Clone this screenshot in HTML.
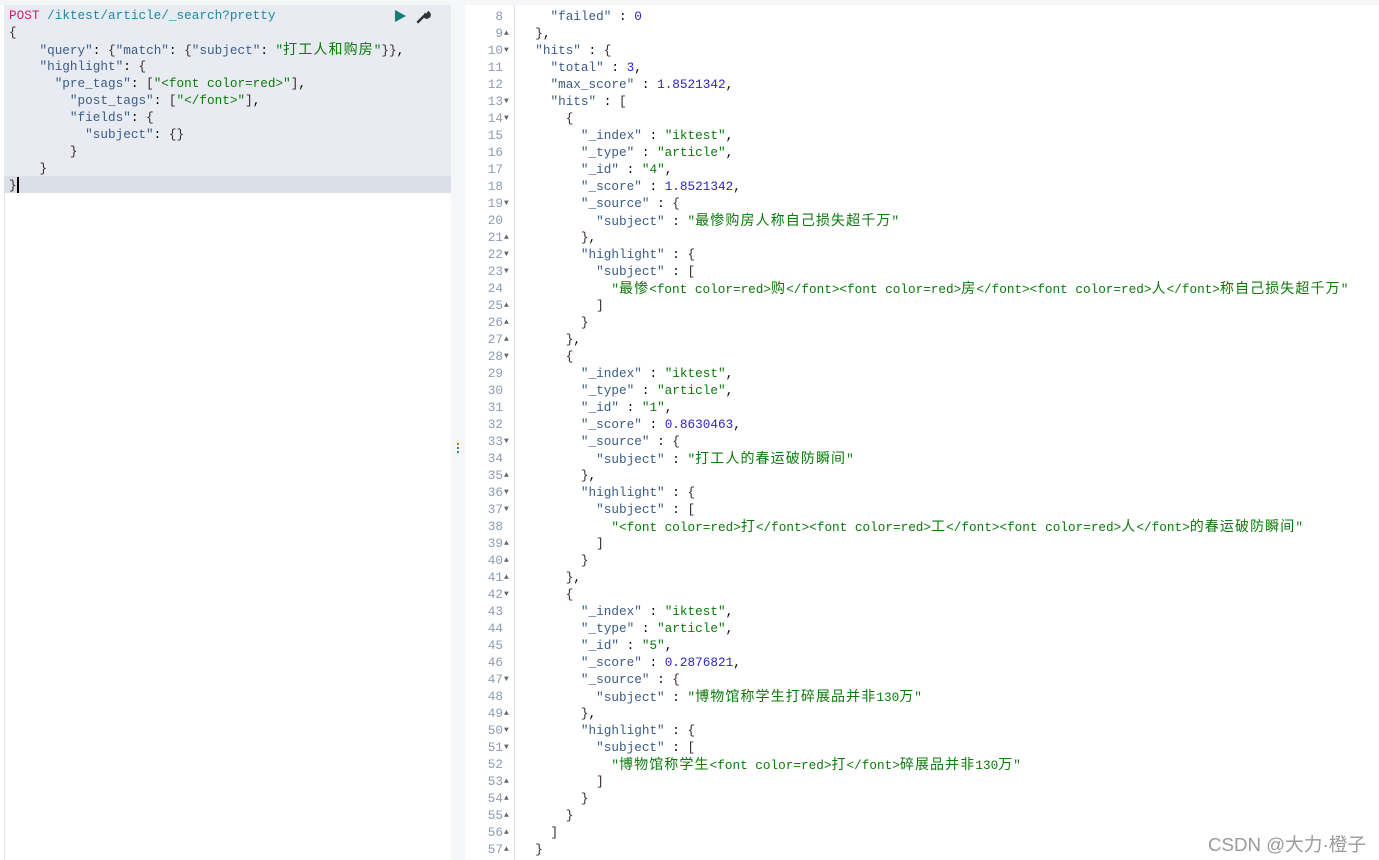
<!DOCTYPE html>
<html><head><meta charset="utf-8"><style>
*{margin:0;padding:0;box-sizing:border-box}
body{width:1379px;height:860px;background:#fff;position:relative;overflow:hidden;font-family:"Liberation Mono","Noto Sans CJK SC",monospace;font-size:12.7px;color:#000}
.top{position:absolute;left:0;top:0;width:1379px;height:5px;background:#f5f6f8}
.lp{position:absolute;left:4px;top:5px;width:447px;height:855px;background:#fff;border-left:1px solid #e3e6ea}
.lbg{position:absolute;left:4px;top:5px;width:447px;height:188px;background:#e8ebf2}
.cur{position:absolute;left:4px;top:176px;width:447px;height:17px;background:#dadfe8}
.div{position:absolute;left:451px;top:5px;width:14px;height:855px;background:#f5f6f8}
.dots{position:absolute;left:457px;top:443px;width:2px;height:10px;background:linear-gradient(#d0771b 0 2px,transparent 2px 4px,#3a78c0 4px 6px,transparent 6px 8px,#3a78c0 8px 10px)}
.gut{position:absolute;left:514px;top:5px;width:1px;height:855px;background:#dde2ea}
.code{position:absolute;white-space:pre;line-height:17px}
.code div{height:17px}
.L{left:9px;top:7px}
.R{left:520px;top:8px}
.nums{position:absolute;left:465px;top:8px;width:38px;text-align:right;line-height:17px;color:#8d9bb2;white-space:pre}
.arr{position:absolute;left:504px;top:8px;line-height:17px;font-size:8px;color:#666;white-space:pre}
.arr div{height:17px}
.k{color:#3b5c86}.s{color:#0b7a0b}.n{color:#2c22d0}.b{color:#3a2a2a}
.m{color:#d41e6b}.u{color:#1b8aa3}
i{font-style:normal;font-size:14px;letter-spacing:1.1px;font-family:"Noto Sans CJK SC",sans-serif}
.wm{position:absolute;left:1208px;top:830px;font-family:"Liberation Sans","Noto Sans CJK SC",sans-serif;font-size:18.7px;color:#9a9a9a}
.play{position:absolute;left:395px;top:10px;width:0;height:0;border-left:11px solid #167d72;border-top:6.5px solid transparent;border-bottom:6.5px solid transparent}
.cursor{position:absolute;left:17px;top:177px;width:2px;height:16px;background:#000}
</style></head><body>
<div class="top"></div>
<div class="lp"></div><div class="lbg"></div><div class="cur"></div>
<div class="div"></div><div class="dots"></div><div class="gut"></div>
<div class="play"></div>
<svg style="position:absolute;left:416px;top:9px" width="15" height="15" viewBox="0 0 15 15"><path d="M2 13 L8 7" stroke="#333" stroke-width="2.5" stroke-linecap="round"/><path d="M7 7 A4 4 0 1 0 12 2 L10.5 4.5 L9 4 L9.5 2.5 Z" fill="#333"/></svg>
<div class="cursor"></div>
<div class="code L"><div><span class="m">POST</span> <span class="u">/iktest/article/_search?pretty</span></div><div class="b">{</div><div>    <span class="k">"query"</span>: <span class="b">{</span><span class="k">"match"</span>: <span class="b">{</span><span class="k">"subject"</span>: <span class="s">"<i>打工人和购房</i>"</span><span class="b">}}</span>,</div><div>    <span class="k">"highlight"</span>: <span class="b">{</span></div><div>      <span class="k">"pre_tags"</span>: <span class="b">[</span><span class="s">"&lt;font color=red&gt;"</span><span class="b">]</span>,</div><div>        <span class="k">"post_tags"</span>: <span class="b">[</span><span class="s">"&lt;/font&gt;"</span><span class="b">]</span>,</div><div>        <span class="k">"fields"</span>: <span class="b">{</span></div><div>          <span class="k">"subject"</span>: <span class="b">{}</span></div><div>        <span class="b">}</span></div><div>    <span class="b">}</span></div><div class="b">}</div></div>
<div class="nums">8
9
10
11
12
13
14
15
16
17
18
19
20
21
22
23
24
25
26
27
28
29
30
31
32
33
34
35
36
37
38
39
40
41
42
43
44
45
46
47
48
49
50
51
52
53
54
55
56
57</div>
<div class="arr"><div> </div><div>▲</div><div>▼</div><div> </div><div> </div><div>▼</div><div>▼</div><div> </div><div> </div><div> </div><div> </div><div>▼</div><div> </div><div>▲</div><div>▼</div><div>▼</div><div> </div><div>▲</div><div>▲</div><div>▲</div><div>▼</div><div> </div><div> </div><div> </div><div> </div><div>▼</div><div> </div><div>▲</div><div>▼</div><div>▼</div><div> </div><div>▲</div><div>▲</div><div>▲</div><div>▼</div><div> </div><div> </div><div> </div><div> </div><div>▼</div><div> </div><div>▲</div><div>▼</div><div>▼</div><div> </div><div>▲</div><div>▲</div><div>▲</div><div>▲</div><div>▲</div></div>
<div class="code R"><div>    <span class="k">"failed"</span> : <span class="n">0</span></div><div>  <span class="b">}</span>,</div><div>  <span class="k">"hits"</span> : <span class="b">{</span></div><div>    <span class="k">"total"</span> : <span class="n">3</span>,</div><div>    <span class="k">"max_score"</span> : <span class="n">1.8521342</span>,</div><div>    <span class="k">"hits"</span> : <span class="b">[</span></div><div>      <span class="b">{</span></div><div>        <span class="k">"_index"</span> : <span class="s">"iktest"</span>,</div><div>        <span class="k">"_type"</span> : <span class="s">"article"</span>,</div><div>        <span class="k">"_id"</span> : <span class="s">"4"</span>,</div><div>        <span class="k">"_score"</span> : <span class="n">1.8521342</span>,</div><div>        <span class="k">"_source"</span> : <span class="b">{</span></div><div>          <span class="k">"subject"</span> : <span class="s">"<i>最惨购房人称自己损失超千万</i>"</span></div><div>        <span class="b">}</span>,</div><div>        <span class="k">"highlight"</span> : <span class="b">{</span></div><div>          <span class="k">"subject"</span> : <span class="b">[</span></div><div>            <span class="s">"<i>最惨</i>&lt;font color=red&gt;<i>购</i>&lt;/font&gt;&lt;font color=red&gt;<i>房</i>&lt;/font&gt;&lt;font color=red&gt;<i>人</i>&lt;/font&gt;<i>称自己损失超千万</i>"</span></div><div>          <span class="b">]</span></div><div>        <span class="b">}</span></div><div>      <span class="b">}</span>,</div><div>      <span class="b">{</span></div><div>        <span class="k">"_index"</span> : <span class="s">"iktest"</span>,</div><div>        <span class="k">"_type"</span> : <span class="s">"article"</span>,</div><div>        <span class="k">"_id"</span> : <span class="s">"1"</span>,</div><div>        <span class="k">"_score"</span> : <span class="n">0.8630463</span>,</div><div>        <span class="k">"_source"</span> : <span class="b">{</span></div><div>          <span class="k">"subject"</span> : <span class="s">"<i>打工人的春运破防瞬间</i>"</span></div><div>        <span class="b">}</span>,</div><div>        <span class="k">"highlight"</span> : <span class="b">{</span></div><div>          <span class="k">"subject"</span> : <span class="b">[</span></div><div>            <span class="s">"&lt;font color=red&gt;<i>打</i>&lt;/font&gt;&lt;font color=red&gt;<i>工</i>&lt;/font&gt;&lt;font color=red&gt;<i>人</i>&lt;/font&gt;<i>的春运破防瞬间</i>"</span></div><div>          <span class="b">]</span></div><div>        <span class="b">}</span></div><div>      <span class="b">}</span>,</div><div>      <span class="b">{</span></div><div>        <span class="k">"_index"</span> : <span class="s">"iktest"</span>,</div><div>        <span class="k">"_type"</span> : <span class="s">"article"</span>,</div><div>        <span class="k">"_id"</span> : <span class="s">"5"</span>,</div><div>        <span class="k">"_score"</span> : <span class="n">0.2876821</span>,</div><div>        <span class="k">"_source"</span> : <span class="b">{</span></div><div>          <span class="k">"subject"</span> : <span class="s">"<i>博物馆称学生打碎展品并非</i>130<i>万</i>"</span></div><div>        <span class="b">}</span>,</div><div>        <span class="k">"highlight"</span> : <span class="b">{</span></div><div>          <span class="k">"subject"</span> : <span class="b">[</span></div><div>            <span class="s">"<i>博物馆称学生</i>&lt;font color=red&gt;<i>打</i>&lt;/font&gt;<i>碎展品并非</i>130<i>万</i>"</span></div><div>          <span class="b">]</span></div><div>        <span class="b">}</span></div><div>      <span class="b">}</span></div><div>    <span class="b">]</span></div><div>  <span class="b">}</span></div></div>
<div class="wm">CSDN @大力·橙子</div>
</body></html>
